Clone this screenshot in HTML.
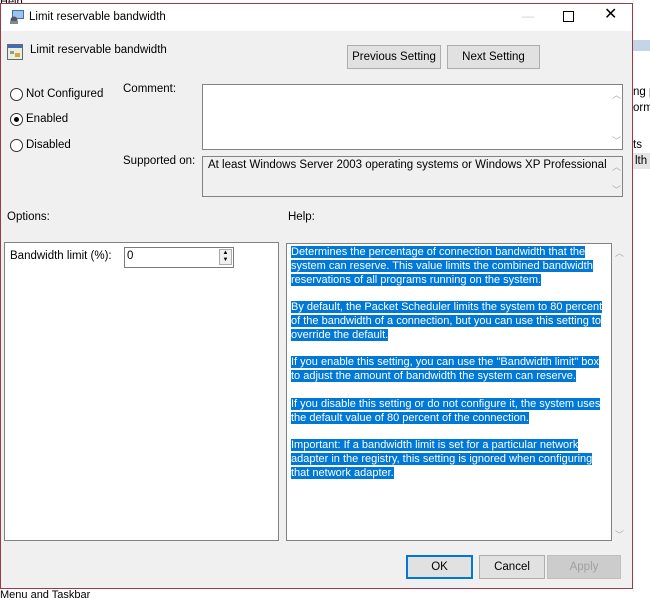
<!DOCTYPE html>
<html><head><meta charset="utf-8"><style>
*{margin:0;padding:0;box-sizing:border-box}
body{width:650px;height:597px;position:relative;overflow:hidden;background:#fff;font-family:"Liberation Sans",sans-serif;font-size:11.5px;color:#000}
.a{position:absolute;white-space:nowrap;line-height:17px}
.btn{position:absolute;background:#e1e1e1;border:1px solid #adadad;text-align:center;line-height:23px;font-size:11.5px}
.box{position:absolute;background:#fff;border:1px solid #828282}
.rad{position:absolute;width:13px;height:13px;border:1px solid #333;border-radius:50%;background:#fff}
.sa{position:absolute;color:#aaa;font-size:9px}
.hl{background:#0078d7;color:#fff;line-height:13.8px;display:inline}
</style></head><body>
<div class="a" style="left:0;top:-6px;font-size:11px;color:#000">Help</div>
<div class="a" style="left:633px;top:84px;font-size:11.5px">ng p</div>
<div class="a" style="left:633px;top:100px;font-size:11.5px">orm</div>
<div class="a" style="left:633px;top:137px;font-size:11.5px">ts</div>
<div class="a" style="left:633px;top:153px;width:17px;height:16px;background:#e5e5e5;padding-left:2px;line-height:16px">lth</div>
<div class="a" style="left:633px;top:40px;width:17px;height:11px;background:#c5d5e8"></div>
<div class="a" style="left:0;top:588px;font-size:11px;line-height:14px">Menu and Taskbar</div>

<div class="a" style="left:0;top:3px;width:633px;height:586px;background:#f0f0f0;border:1px solid #9a3b4a;border-top:none"></div>
<div class="a" style="left:1px;top:3px;width:631px;height:28px;background:#fff"></div>
<div class="a" style="left:0;top:3px;width:633px;height:1px;background:#9a3b4a"></div>
<svg class="a" style="left:9px;top:9px" width="16" height="16"><rect x="3" y="1" width="12" height="9" fill="#3b6fb6"/><rect x="4" y="2" width="10" height="7" fill="#9cc3ea"/><circle cx="5" cy="11" r="3.5" fill="#556"/><rect x="1" y="12" width="8" height="3" fill="#888"/></svg>
<div class="a" style="left:29px;top:9px;font-size:11.5px">Limit reservable bandwidth</div>
<div class="a" style="left:522px;top:8px;color:#ccc;font-size:12px">—</div>
<div class="a" style="left:563px;top:11px;width:11px;height:11px;border:1px solid #000"></div>
<div class="a" style="left:604px;top:6px;font-size:16px">✕</div>

<svg class="a" style="left:7px;top:44px" width="16" height="16"><rect x="0.5" y="0.5" width="15" height="15" fill="#e8f0d8" stroke="#667"/><rect x="1" y="1" width="14" height="3" fill="#3b6fb6"/><rect x="3" y="7" width="4" height="3" fill="#999"/><rect x="8" y="9" width="5" height="4" fill="#d9a441"/></svg>
<div class="a" style="left:30px;top:42px">Limit reservable bandwidth</div>
<div class="btn" style="left:347px;top:45px;width:94px;height:24px">Previous Setting</div>
<div class="btn" style="left:447px;top:45px;width:93px;height:24px">Next Setting</div>

<div class="rad" style="left:10px;top:88px"></div><div class="a" style="left:26px;top:86px">Not Configured</div>
<div class="rad" style="left:10px;top:113px"></div><div class="a" style="left:14px;top:117px;width:5px;height:5px;border-radius:50%;background:#000"></div><div class="a" style="left:26px;top:111px">Enabled</div>
<div class="rad" style="left:10px;top:139px"></div><div class="a" style="left:26px;top:137px">Disabled</div>

<div class="a" style="left:123px;top:81px">Comment:</div>
<div class="box" style="left:202px;top:84px;width:421px;height:66px"></div>
<div class="sa" style="left:612px;top:88px">︿</div><div class="sa" style="left:612px;top:134px">﹀</div>
<div class="a" style="left:123px;top:153px">Supported on:</div>
<div class="box" style="left:202px;top:156px;width:421px;height:41px;background:#f0f0f0"></div>
<div class="a" style="left:208px;top:157px">At least Windows Server 2003 operating systems or Windows XP Professional</div>
<div class="sa" style="left:612px;top:160px">︿</div><div class="sa" style="left:612px;top:183px">﹀</div>

<div class="a" style="left:7px;top:209px">Options:</div>
<div class="a" style="left:288px;top:209px">Help:</div>
<div class="box" style="left:4px;top:242px;width:275px;height:299px"></div>
<div class="a" style="left:10px;top:248px">Bandwidth limit (%):</div>
<div class="box" style="left:124px;top:247px;width:110px;height:21px;border-color:#7a7a7a"></div>
<div class="a" style="left:127px;top:248px">0</div>
<div class="a" style="left:219px;top:249px;width:13px;height:16px;border:1px solid #aaa;background:#f0f0f0;font-size:6px;line-height:7px;text-align:center">▲<br>▼</div>

<div class="box" style="left:286px;top:243px;width:326px;height:298px"></div>
<div class="sa" style="left:615px;top:246px">︿</div><div class="sa" style="left:615px;top:528px">﹀</div>
<div class="a" style="left:291px;top:246px;font-size:11px;line-height:13.8px;white-space:normal;width:325px">
<span class="hl">Determines the percentage of connection bandwidth that the </span><br><span class="hl">system can reserve. This value limits the combined bandwidth </span><br><span class="hl">reservations of all programs running on the system.</span><br><br>
<span class="hl">By default, the Packet Scheduler limits the system to 80 percent </span><br><span class="hl">of the bandwidth of a connection, but you can use this setting to</span><br><span class="hl">override the default.</span><br><br>
<span class="hl">If you enable this setting, you can use the "Bandwidth limit" box </span><br><span class="hl">to adjust the amount of bandwidth the system can reserve.</span><br><br>
<span class="hl">If you disable this setting or do not configure it, the system uses </span><br><span class="hl">the default value of 80 percent of the connection.</span><br><br>
<span class="hl">Important: If a bandwidth limit is set for a particular network </span><br><span class="hl">adapter in the registry, this setting is ignored when configuring </span><br><span class="hl">that network adapter.</span>
</div>

<div class="btn" style="left:406px;top:555px;width:67px;height:24px;border:2px solid #0078d7;line-height:21px">OK</div>
<div class="btn" style="left:479px;top:555px;width:66px;height:24px">Cancel</div>
<div class="btn" style="left:547px;top:555px;width:74px;height:24px;background:#ccc;border-color:#bfbfbf;color:#a0a0a0">Apply</div>
</body></html>
